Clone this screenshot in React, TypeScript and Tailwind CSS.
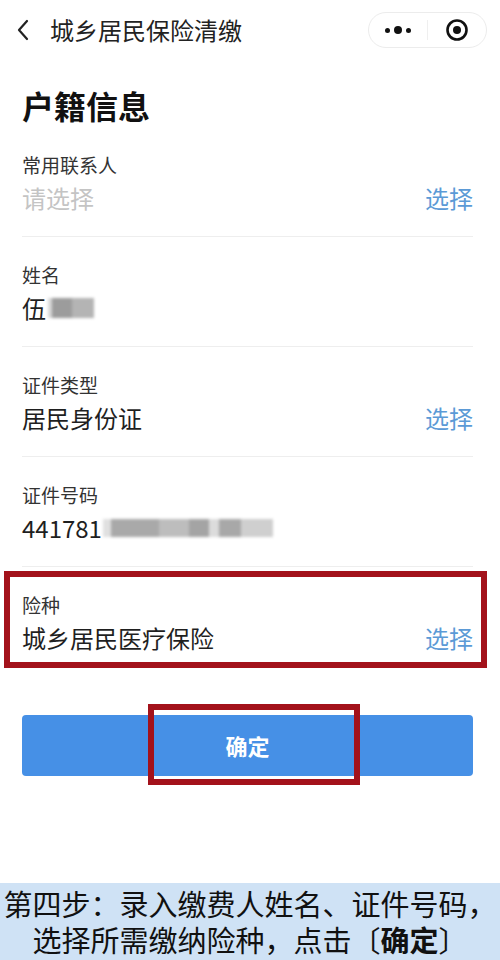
import React from "react";

const font = { fontFamily: '"Noto Sans CJK SC", "Noto Sans", sans-serif' };

function Row({
  label,
  value,
  placeholder,
  action,
  blur,
  divider = true,
}: {
  label: string;
  value: React.ReactNode;
  placeholder?: boolean;
  action?: boolean;
  blur?: React.ReactNode;
  divider?: boolean;
}) {
  return (
    <div className={`pt-[27px] pb-[24px] ${divider ? "border-b border-[#eeeeee]" : ""}`}>
      <div className="text-[19px] leading-[22px] text-[#333333]">{label}</div>
      <div className="mt-[8px] flex h-[28px] items-center justify-between">
        <div className="flex items-center">
          <span className={`text-[24px] leading-[28px] ${placeholder ? "text-[#c4c4c4]" : "text-[#1f1f1f]"}`}>
            {value}
          </span>
          {blur}
        </div>
        {action && <span className="text-[24px] leading-[28px] text-[#5b9ad6]">选择</span>}
      </div>
    </div>
  );
}

export default function App() {
  return (
    <div className="flex h-[960px] w-[500px] flex-col bg-white" style={font}>
      <div className="flex-1">
        {/* nav bar */}
        <div className="flex h-[60px] items-center justify-between pl-[15px] pr-[13px]">
          <div className="flex items-center">
            <svg width="16" height="24" viewBox="0 0 16 24" className="mr-[19px]">
              <path d="M12 3 L4 12 L12 21" fill="none" stroke="#222" strokeWidth="2.2" strokeLinecap="round" strokeLinejoin="round" />
            </svg>
            <span className="text-[24px] leading-[30px] text-[#222222]">城乡居民保险清缴</span>
          </div>
          <div className="flex h-[36px] w-[119px] items-center rounded-full border border-[#ececec]">
            <div className="flex flex-1 items-center justify-center gap-[4px]">
              <span className="h-[5px] w-[5px] rounded-full bg-[#111]" />
              <span className="h-[8px] w-[8px] rounded-full bg-[#111]" />
              <span className="h-[5px] w-[5px] rounded-full bg-[#111]" />
            </div>
            <div className="h-[20px] w-px bg-[#efefef]" />
            <div className="flex flex-1 items-center justify-center">
              <svg width="24" height="24" viewBox="0 0 24 24">
                <circle cx="12" cy="12" r="9.5" fill="none" stroke="#111" strokeWidth="2.6" />
                <circle cx="12" cy="12" r="4" fill="#111" />
              </svg>
            </div>
          </div>
        </div>

        <div className="pl-[22px] pr-[27px]">
          <div className="pt-[25px] text-[32px] font-bold leading-[40px] text-[#111111]">户籍信息</div>
          <div className="mt-[2px]">
            <Row label="常用联系人" value="请选择" placeholder action />
          </div>
          <Row
            label="姓名"
            value="伍"
            blur={
              <div className="ml-[2px] flex h-[20px] w-[46px] blur-[1.5px]">
                <div className="h-full w-[4px] bg-[#d8d8d8]" />
                <div className="h-full w-[20px] bg-[#9c9c9c]" />
                <div className="h-full w-[22px] bg-[#b4b4b4]" />
              </div>
            }
          />
          <Row label="证件类型" value="居民身份证" action />
          <Row
            label="证件号码"
            value="441781"
            divider={false}
            blur={
              <div className="ml-[1px] flex h-[18px] w-[170px] items-center blur-[1.5px]">
                <div className="h-full w-[8px] bg-[#e0e0e0]" />
                <div className="h-full w-[48px] bg-[#a9a9a9]" />
                <div className="h-full w-[30px] bg-[#bdbdbd]" />
                <div className="h-full w-[20px] bg-[#a4a4a4]" />
                <div className="h-full w-[10px] bg-[#dcdcdc]" />
                <div className="h-full w-[22px] bg-[#a8a8a8]" />
                <div className="h-full w-[32px] bg-[#cfcfcf]" />
              </div>
            }
          />
          <div className="border-t border-[#eeeeee]" />
          <div className="relative">
            <Row label="险种" value="城乡居民医疗保险" action divider={false} />
            <div className="pointer-events-none absolute left-[-18px] top-[4px] h-[97px] w-[483px] border-[6px] border-[#a3121b]" />
          </div>

          <div className="relative mt-[39px]">
            <div className="flex h-[61px] items-center justify-center rounded-[4px] bg-[#4690e6] text-[22px] font-bold text-white">
              确定
            </div>
            <div className="pointer-events-none absolute left-[126px] top-[-11px] h-[81px] w-[212px] border-[6px] border-[#a3121b]" />
          </div>
        </div>
      </div>

      <div className="h-[77px] bg-[#cfe2f5] pt-[2px] text-center text-[29px] leading-[36px] text-[#111111]">
        <div className="whitespace-nowrap">第四步：录入缴费人姓名、证件号码，</div>
        <div className="whitespace-nowrap">选择所需缴纳险种，点击〔<b>确定</b>〕</div>
      </div>
    </div>
  );
}
